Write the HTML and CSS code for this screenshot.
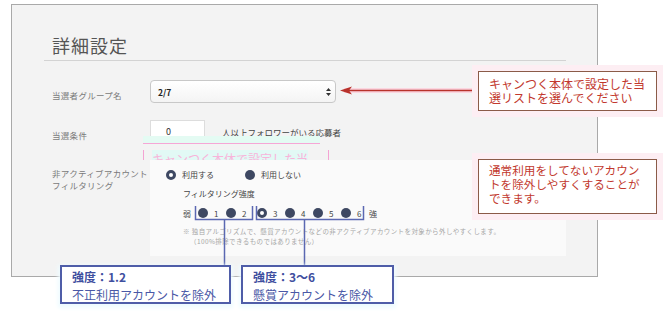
FILE: index.html
```html
<!DOCTYPE html>
<html lang="ja">
<head>
    <meta charset="UTF-8">
    <title>詳細設定</title>
    <link rel="stylesheet" href="styles.css">
</head>
<body>
    <div class="screen">
        <h2 class="title">詳細設定</h2>

        <!-- 画像編集の残り (うっすら見えている) -->
        <div class="ghost-band"></div>
        <div class="ghost-box"><span>キャンつく本体で設定した当</span></div>

        <div class="rows">
            <div class="row">
                <div class="label">当選者グループ名</div>
                <div class="select">
                    <span>2/7</span>
                    <svg width="5" height="8" viewBox="0 0 5 8"><path d="M2.5 0 L5 3 H0 Z M2.5 8 L5 5 H0 Z" fill="#333"/></svg>
                </div>
            </div>
            <div class="row">
                <div class="label">当選条件</div>
                <div class="cond">
                    <div class="input">0</div>
                    <span>人以上フォロワーがいる応募者</span>
                </div>
            </div>
            <div class="row row-top">
                <div class="label label-top">非アクティブアカウント<br>フィルタリング</div>
                <div class="filter">
                    <div class="radios">
                        <span class="radio"><i class="dot on"></i>利用する</span>
                        <span class="radio"><i class="dot"></i>利用しない</span>
                    </div>
                    <div class="sub">フィルタリング強度</div>
                    <div class="scale">
                        <span class="end">弱</span>
                        <span class="group">
                            <span class="step"><i class="dot"></i>1</span>
                            <span class="step"><i class="dot"></i>2</span>
                        </span>
                        <span class="group group-2">
                            <span class="step"><i class="dot on"></i>3</span>
                            <span class="step"><i class="dot"></i>4</span>
                            <span class="step"><i class="dot"></i>5</span>
                            <span class="step"><i class="dot"></i>6</span>
                        </span>
                        <span class="end">強</span>
                    </div>
                    <p class="note">※ 独自アルゴリズムで、懸賞アカウントなどの非アクティブアカウントを対象から外しやすくします。<br><span class="indent">（100%排除できるものではありません）</span></p>
                </div>
            </div>
        </div>
    </div>

    <!-- 注釈 -->
    <svg class="marks" width="670" height="327" viewBox="0 0 670 327">
        <line x1="344" y1="90.5" x2="478" y2="90.5" stroke="#fbd6e0" stroke-width="5"/>
        <line x1="346" y1="90.5" x2="478" y2="90.5" stroke="#b8322b" stroke-width="1.5"/>
        <polygon points="340,90.5 352,86.5 349,90.5 352,94.5" fill="#b8322b"/>
        <g fill="none" stroke="#5b68b2" stroke-width="1.5">
            <path d="M195.5 206 V219.5 H252.5 V206"/>
            <path d="M256.5 206 V219.5 H363.5 V206"/>
            <path d="M224.5 219.5 V265"/>
            <path d="M304.5 219.5 V265"/>
        </g>
    </svg>

    <div class="callout pink c-select">キャンつく本体で設定した当<br>選リストを選んでください</div>
    <div class="callout pink c-filter">通常利用をしてないアカウン<br>トを除外しやすくすることが<br>できます。</div>
    <div class="callout blue c-low"><b>強度：1.2</b><br>不正利用アカウントを除外</div>
    <div class="callout blue c-high"><b>強度：3〜6</b><br>懸賞アカウントを除外</div>
</body>
</html>
```

FILE: styles.css
```css
body {
    margin: 0;
    width: 670px;
    height: 327px;
    background: #fff;
    font-family: "Noto Sans CJK JP", "Noto Sans", sans-serif;
    position: relative;
    overflow: hidden;
}
.screen {
    position: relative;
    box-sizing: border-box;
    margin: 4px 0 0 11px;
    width: 587px;
    height: 273px;
    padding: 28px 31px 0 32px;
    border: 1px solid #a9a9a9;
    background: #f3f3f3;
}
.title {
    margin: 0;
    padding: 0 0 3px 8px;
    font-size: 18px;
    line-height: 24px;
    font-weight: 400;
    letter-spacing: 1px;
    color: #555;
    border-bottom: 1px solid #d3d3d3;
}
.ghost-band {
    position: absolute;
    left: 131px;
    top: 131px;
    width: 177px;
    height: 7px;
    background: #e4fbf3;
    border-bottom: 1px solid #f6a6d6;
}
.ghost-box {
    position: absolute;
    left: 131px;
    top: 145px;
    width: 176px;
    height: 10px;
    overflow: hidden;
    border-left: 1px solid #f4a3d3;
    border-right: 1px solid #f4a3d3;
    font-size: 12px;
    line-height: 17px;
    color: #f8b4da;
    padding-left: 8px;
}
.ghost-box span {
    background: #e2f9f5;
}
.rows {
    padding-left: 8px;
}
.row {
    display: grid;
    grid-template-columns: 98px 1fr;
    margin-top: 17px;
}
.row:first-child {
    margin-top: 19px;
}
.label {
    padding-top: 9px;
    font-size: 8.5px;
    line-height: 12px;
    color: #7a7a7a;
    letter-spacing: 0.3px;
}
.label-top {
    padding-top: 7px;
}
.select {
    box-sizing: border-box;
    width: 186px;
    height: 23px;
    display: flex;
    align-items: center;
    justify-content: space-between;
    padding: 0 4px 0 7px;
    border: 1px solid #c8c8c8;
    border-radius: 4px;
    background: linear-gradient(#fff, #f4f4f4);
    font-size: 8.5px;
    font-weight: 700;
    color: #222;
}
.cond {
    display: flex;
    align-items: center;
    gap: 17px;
    font-size: 8.5px;
    color: #444;
}
.input {
    box-sizing: border-box;
    width: 55px;
    height: 23px;
    padding-left: 15px;
    display: flex;
    align-items: center;
    border: 1px solid #ddd;
    background: #fff;
    font-size: 9px;
    color: #333;
}
.filter {
    position: relative;
    z-index: 1;
    height: 96px;
    box-sizing: border-box;
    padding: 9px 0 0 16px;
    background: #fafafa;
    font-size: 8px;
    color: #444;
}
.radios {
    display: flex;
    line-height: 12px;
}
.radio {
    display: flex;
    align-items: center;
    gap: 6px;
    margin-right: 31px;
}
.dot {
    display: inline-block;
    box-sizing: border-box;
    width: 10px;
    height: 10px;
    border-radius: 50%;
    background: #3e4862;
}
.dot.on {
    background: #fff;
    border: 3px solid #3e4862;
}
.sub {
    margin: 7px 0 0 17px;
    line-height: 12px;
}
.scale {
    display: flex;
    align-items: center;
    margin: 7px 0 0 17px;
    height: 12px;
}
.end {
    width: 8px;
}
.group {
    display: flex;
    margin-left: 7px;
}
.group-2 {
    margin-left: 3px;
}
.step {
    display: flex;
    align-items: center;
    gap: 6px;
    width: 28px;
}
.note {
    margin: 7px 0 0 17px;
    font-size: 6.5px;
    line-height: 10px;
    color: #a6a6a6;
    letter-spacing: 0.4px;
}
.indent {
    padding-left: 7px;
}
.marks {
    position: absolute;
    left: 0;
    top: 0;
    z-index: 2;
}
.callout {
    position: absolute;
    z-index: 3;
    box-sizing: border-box;
    background: #fff;
}
.pink {
    border: 1px solid #8b5b48;
    box-shadow: 0 0 0 6px #fdeef3;
    padding-left: 10px;
    color: #c2382d;
    line-height: 14px;
}
.c-select {
    left: 478px;
    top: 71px;
    width: 179px;
    height: 40px;
    padding-top: 5px;
    font-size: 12px;
}
.c-filter {
    left: 478px;
    top: 159px;
    width: 179px;
    height: 55px;
    padding-top: 3px;
    font-size: 11.6px;
}
.blue {
    top: 265px;
    height: 39px;
    border: 2px solid #4f5da8;
    box-shadow: 0 2px 4px 2px #eefbff;
    padding: 1px 0 0 10px;
    font-size: 12px;
    line-height: 18px;
    color: #4a58a6;
}
.blue b {
    font-weight: 700;
    color: #3f4fa0;
}
.c-low {
    left: 60px;
    width: 171px;
}
.c-high {
    left: 241px;
    width: 153px;
}
```
